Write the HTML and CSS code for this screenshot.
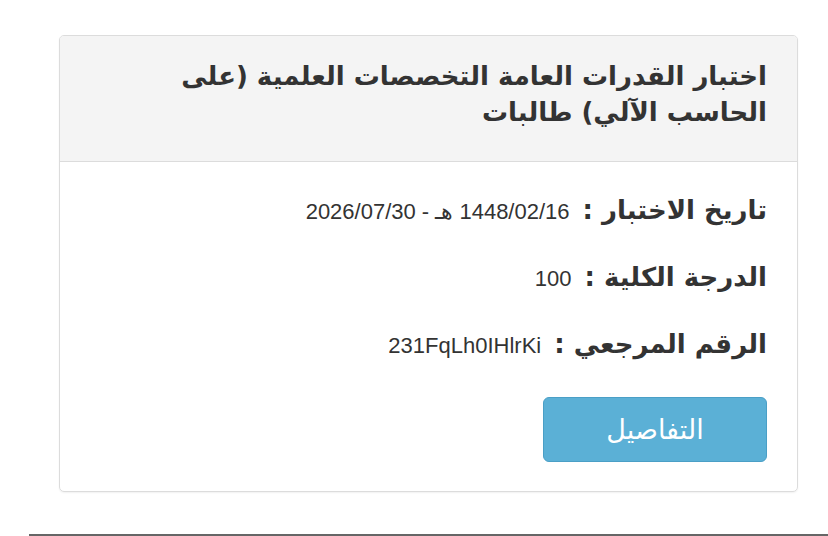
FILE: index.html
```html
<!DOCTYPE html>
<html lang="ar" dir="rtl">
<head>
<meta charset="utf-8">
<title>الاختبارات</title>
<link rel="stylesheet" href="styles.css">
</head>
<body>
<main class="page">
  <section class="card">
    <header class="card-head">
      <h3 class="card-title">اختبار القدرات العامة التخصصات العلمية (على الحاسب الآلي) طالبات</h3>
    </header>
    <div class="card-body">
      <p class="row"><span class="label">تاريخ الاختبار :</span><span class="value">1448/02/16 هـ - 2026/07/30</span></p>
      <p class="row"><span class="label">الدرجة الكلية :</span><span class="value">100</span></p>
      <p class="row"><span class="label">الرقم المرجعي :</span><span class="value">231FqLh0IHlrKi</span></p>
      <div class="actions">
        <a class="btn" href="#">التفاصيل</a>
      </div>
    </div>
  </section>
  <hr class="rule">
</main>
</body>
</html>
```

FILE: styles.css
```css
html, body {
  margin: 0;
  padding: 0;
  background: #fff;
}

body {
  font-family: "DejaVu Sans", "Liberation Sans", sans-serif;
  color: #333;
  overflow: hidden;
}

.page {
  direction: ltr;
  padding-top: 35px;
}

.card {
  direction: rtl;
  box-sizing: border-box;
  width: 739px;
  margin-left: 59px;
  border: 1px solid #dcdcdc;
  border-radius: 5px;
  box-shadow: 0 1px 2px rgba(0, 0, 0, 0.06);
  overflow: hidden;
}

.card-head {
  box-sizing: border-box;
  height: 126px;
  background: #f4f4f4;
  border-bottom: 1px solid #dcdcdc;
  padding: 22px 30px 0 30px;
}

.card-title {
  margin: 0;
  font-size: 26px;
  line-height: 36px;
  font-weight: bold;
  color: #333;
}

.card-body {
  padding: 30px 30px 29px 30px;
}

.row {
  margin: 0 0 30px 0;
  display: flex;
  align-items: baseline;
  gap: 13px;
  line-height: 37px;
  height: 37px;
}

.label {
  font-size: 26px;
  font-weight: bold;
  color: #333;
}

.value {
  font-family: "Liberation Sans", Arial, sans-serif;
  font-size: 22px;
  color: #333;
}

.actions {
  display: flex;
  margin-top: 34px;
}

.btn {
  box-sizing: border-box;
  display: flex;
  align-items: center;
  justify-content: center;
  width: 224px;
  height: 65px;
  background: #5bb0d6;
  border: 1px solid #4a9fc6;
  border-radius: 6px;
  color: #fff;
  font-size: 27px;
  font-weight: normal;
  text-decoration: none;
}

.rule {
  margin: 42px 0 0 29px;
  border: 0;
  border-top: 3px solid #666;
  height: 0;
}
```
